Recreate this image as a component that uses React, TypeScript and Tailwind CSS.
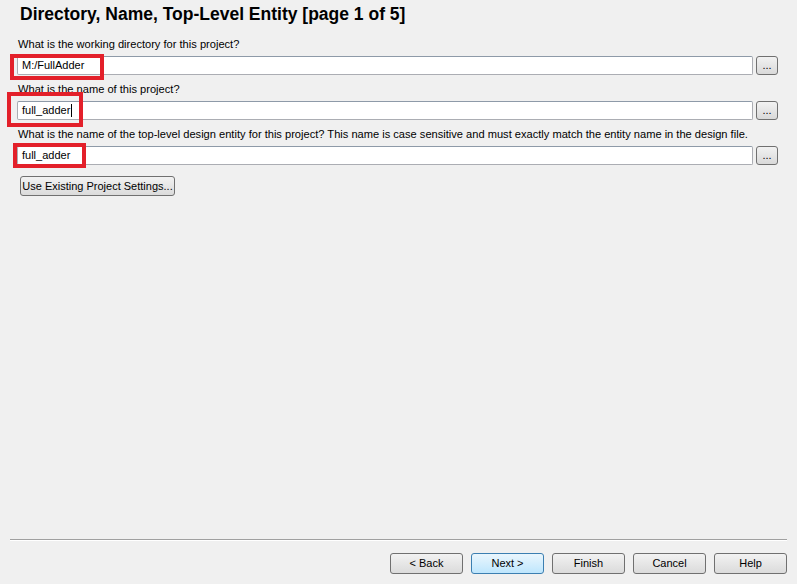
import React from 'react';

const font = { fontFamily: '"Liberation Sans", Arial, sans-serif' };

const Field = ({ value, caret }: { value: string; caret?: boolean }) => {
  return <div className="flex items-center gap-[3px] pl-[17px] pr-[19px]">
      <div className="flex-1 h-[19px] bg-white border border-[#abadb3] border-t-[#8e9aa8] rounded-[2px] flex items-center pl-[4px] text-[11px] text-black">
        <span>{value}</span>
        {caret && <span className="inline-block w-px h-[13px] bg-black ml-px" />}
      </div>
      <button className="w-[22px] h-[19px] rounded-[3px] border border-[#707070] bg-gradient-to-b from-[#f2f2f2] to-[#d9d9d9] text-[11px] leading-[11px] flex items-end justify-center pb-[3px] text-black">
        ...
      </button>
    </div>;
};

const WizButton = ({ label, primary }: { label: string; primary?: boolean }) => {
  return <button className={primary ? 'w-[73px] h-[21px] rounded-[3px] border border-[#3c7fb1] bg-gradient-to-b from-[#eaf6fd] to-[#bee6fd] text-[11px] text-black' : 'w-[73px] h-[21px] rounded-[3px] border border-[#707070] bg-gradient-to-b from-[#f2f2f2] to-[#dbdbdb] text-[11px] text-black'}>
      {label}
    </button>;
};

export default function App() {
  return <div className="w-[797px] h-[584px] bg-[#f0f0f0] relative flex flex-col overflow-hidden" style={font}>
      <h1 className="pl-[20px] pt-[3px] h-[37px] text-[17.5px] leading-[22px] font-bold text-black">
        Directory, Name, Top-Level Entity [page 1 of 5]
      </h1>

      <p className="pl-[18px] text-[11.1px] leading-[14px] text-black">What is the working directory for this project?</p>
      <div className="mt-[5px]">
        <Field value="M:/FullAdder" />
      </div>

      <p className="pl-[18px] mt-[7px] text-[11.1px] leading-[14px] text-black">What is the name of this project?</p>
      <div className="mt-[5px]">
        <Field value="full_adder" caret />
      </div>

      <p className="pl-[18px] mt-[7px] text-[11.1px] leading-[14px] text-black">
        What is the name of the top-level design entity for this project? This name is case sensitive and must exactly match the entity name in the design file.
      </p>
      <div className="mt-[5px]">
        <Field value="full_adder" />
      </div>

      <div className="pl-[20px] mt-[8px]">
        <button className="w-[155px] h-[20px] rounded-[3px] border border-[#707070] bg-gradient-to-b from-[#f2f2f2] to-[#dbdbdb] text-[11px] text-black">
          Use Existing Project Settings...
        </button>
      </div>

      <div className="flex-1" />

      <div className="mx-[10px] w-[777px] h-[2px] border-t border-[#a0a0a0] border-b border-b-white" />

      <div className="flex justify-end gap-[8px] pr-[10px] pt-[12px] pb-[10px]">
        <WizButton label="< Back" />
        <WizButton label="Next >" primary />
        <WizButton label="Finish" />
        <WizButton label="Cancel" />
        <WizButton label="Help" />
      </div>

      {/* red annotation boxes */}
      <div className="absolute left-[10px] top-[54px] w-[94px] h-[26px] border-[4px] border-[#e3202a]" />
      <div className="absolute left-[7px] top-[92px] w-[76px] h-[35px] border-[4px] border-[#e3202a]" />
      <div className="absolute left-[13px] top-[143px] w-[73px] h-[25px] border-[4px] border-[#e3202a]" />
    </div>;
}
